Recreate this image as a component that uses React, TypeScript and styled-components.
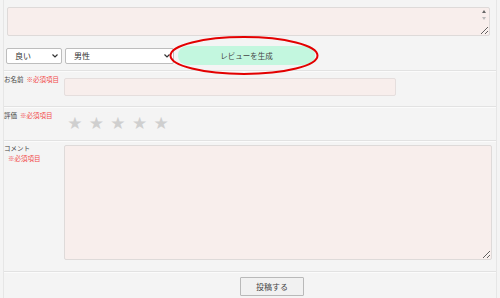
import React from "react";
import styled, { createGlobalStyle } from "styled-components";

const GlobalStyle = createGlobalStyle`
  html, body { margin: 0; padding: 0; }
  body {
    background: #f4f4f4;
    font-family: "Noto Sans CJK JP", "Noto Sans", sans-serif;
    color: #333;
  }
  * { box-sizing: border-box; }
`;

const Page = styled.div`
  width: 500px;
  height: 298px;
  position: relative;
  padding: 0 3px;
  overflow: hidden;
`;

const Frame = styled.div`
  border-left: 1px solid #e6e6e6;
  border-right: 1px solid #e6e6e6;
  height: 100%;
`;

const TopArea = styled.div`
  padding: 7px 6px 0 3px;
  position: relative;
`;

const Field = styled.textarea<{ $h: number; $mt?: number }>`
  display: block;
  width: 100%;
  height: ${(p) => p.$h}px;
  margin-top: ${(p) => p.$mt ?? 0}px;
  background: #f8eeec;
  border: 1px solid #dedad9;
  border-radius: 2px;
  resize: vertical;
  font-family: inherit;
  font-size: 8px;
  outline: none;
`;

const Arrows = styled.div`
  position: absolute;
  right: 10px;
  top: 10px;
  display: flex;
  flex-direction: column;
  gap: 4px;
  align-items: center;
`;

const Tri = styled.span<{ $up?: boolean }>`
  width: 0;
  height: 0;
  border-left: 2px solid transparent;
  border-right: 2px solid transparent;
  ${(p) =>
    p.$up
      ? "border-bottom: 3px solid #666;"
      : "border-top: 3px solid #bbb;"}
`;

const Controls = styled.div`
  display: flex;
  align-items: center;
  gap: 3px;
  height: 34px;
  padding: 10px 0 5px 2px;
`;

const SelectWrap = styled.div<{ $w: number }>`
  position: relative;
  flex: none;
  width: ${(p) => p.$w}px;
  height: 16px;
  line-height: 0;
`;

const Select = styled.select`
  appearance: none;
  display: block;
  width: 100%;
  height: 16px;
  margin: 0;
  background: #fff;
  border: 1px solid #bdbdbd;
  border-radius: 2px;
  font-family: inherit;
  font-size: 8px;
  line-height: 14px;
  color: #333;
  padding: 0 0 0 8px;
  outline: none;
`;

const Chevron = styled.svg`
  position: absolute;
  right: 4px;
  top: 6px;
  pointer-events: none;
`;

const GenerateButton = styled.button`
  flex: none;
  width: 137px;
  height: 19px;
  margin-left: 1px;
  background: #c3f7df;
  border: none;
  border-radius: 9px;
  font-family: inherit;
  font-size: 7.5px;
  line-height: 19px;
  color: #444;
  padding: 0;
`;

const Ellipse = styled.svg`
  position: absolute;
  left: 168px;
  top: 35px;
  pointer-events: none;
`;

const Row = styled.div<{ $pt: number; $pb: number }>`
  display: grid;
  grid-template-columns: 60px 1fr;
  align-items: start;
  border-top: 1px solid #e2e2e2;
  box-shadow: inset 0 1px 0 #fbfbfb;
  padding: ${(p) => p.$pt}px 4px ${(p) => p.$pb}px 0;
`;

const Label = styled.div<{ $stack?: boolean }>`
  font-size: 6.5px;
  line-height: ${(p) => (p.$stack ? 9.5 : 10)}px;
  color: #444;
  display: flex;
  flex-direction: ${(p) => (p.$stack ? "column" : "row")};
  gap: ${(p) => (p.$stack ? 0 : 3)}px;
`;

const Required = styled.span<{ $indent?: boolean }>`
  color: #f24a4a;
  padding-left: ${(p) => (p.$indent ? 4 : 0)}px;
`;

const TextInput = styled.input`
  display: block;
  width: 332px;
  height: 18px;
  margin-top: 4px;
  background: #f8eeec;
  border: 1px solid #e5dedd;
  border-radius: 2px;
  outline: none;
`;

const Stars = styled.div`
  display: flex;
  gap: 4px;
  padding: 4px 0 0 2px;
`;

const Star = styled.span`
  font-family: "DejaVu Sans", sans-serif;
  font-size: 17px;
  line-height: 18px;
  width: 17.6px;
  color: #cfcfcf;
  text-align: center;
`;

const SubmitRow = styled.div`
  border-top: 1px solid #e2e2e2;
  box-shadow: inset 0 1px 0 #fbfbfb;
  display: flex;
  padding: 5px 0 0 236px;
`;

const SubmitButton = styled.button`
  width: 64px;
  height: 19px;
  background: #f1f1f1;
  border: 1px solid #b9b9b9;
  border-radius: 1px;
  font-family: inherit;
  font-size: 8px;
  line-height: 17px;
  color: #444;
  padding: 0;
`;

export default function App() {
  return (
    <>
      <GlobalStyle />
      <Page>
        <Frame>
          <TopArea>
            <Field $h={29} />
            <Arrows>
              <Tri $up />
              <Tri />
            </Arrows>
          </TopArea>
          <Controls>
            <SelectWrap $w={56}>
              <Select defaultValue="good">
                <option value="good">良い</option>
              </Select>
              <Chevron width="6" height="4" viewBox="0 0 6 4">
                <path d="M0.5 0.5 L3 3 L5.5 0.5" fill="none" stroke="#333" strokeWidth="1.2" />
              </Chevron>
            </SelectWrap>
            <SelectWrap $w={109}>
              <Select defaultValue="male">
                <option value="male">男性</option>
              </Select>
              <Chevron width="6" height="4" viewBox="0 0 6 4">
                <path d="M0.5 0.5 L3 3 L5.5 0.5" fill="none" stroke="#333" strokeWidth="1.2" />
              </Chevron>
            </SelectWrap>
            <GenerateButton>レビューを生成</GenerateButton>
          </Controls>
          <Row $pt={3} $pb={10}>
            <Label>
              お名前<Required>※必須項目</Required>
            </Label>
            <TextInput />
          </Row>
          <Row $pt={3} $pb={8}>
            <Label>
              評価<Required>※必須項目</Required>
            </Label>
            <Stars>
              <Star>★</Star>
              <Star>★</Star>
              <Star>★</Star>
              <Star>★</Star>
              <Star>★</Star>
            </Stars>
          </Row>
          <Row $pt={3} $pb={11}>
            <Label $stack>
              コメント<Required $indent>※必須項目</Required>
            </Label>
            <Field $h={115} $mt={1} />
          </Row>
          <SubmitRow>
            <SubmitButton>投稿する</SubmitButton>
          </SubmitRow>
        </Frame>
        <Ellipse width="152" height="42" viewBox="0 0 152 42">
          <ellipse cx="76" cy="20.5" rx="73.5" ry="18.5" fill="none" stroke="#e30000" strokeWidth="2" />
        </Ellipse>
      </Page>
    </>
  );
}
